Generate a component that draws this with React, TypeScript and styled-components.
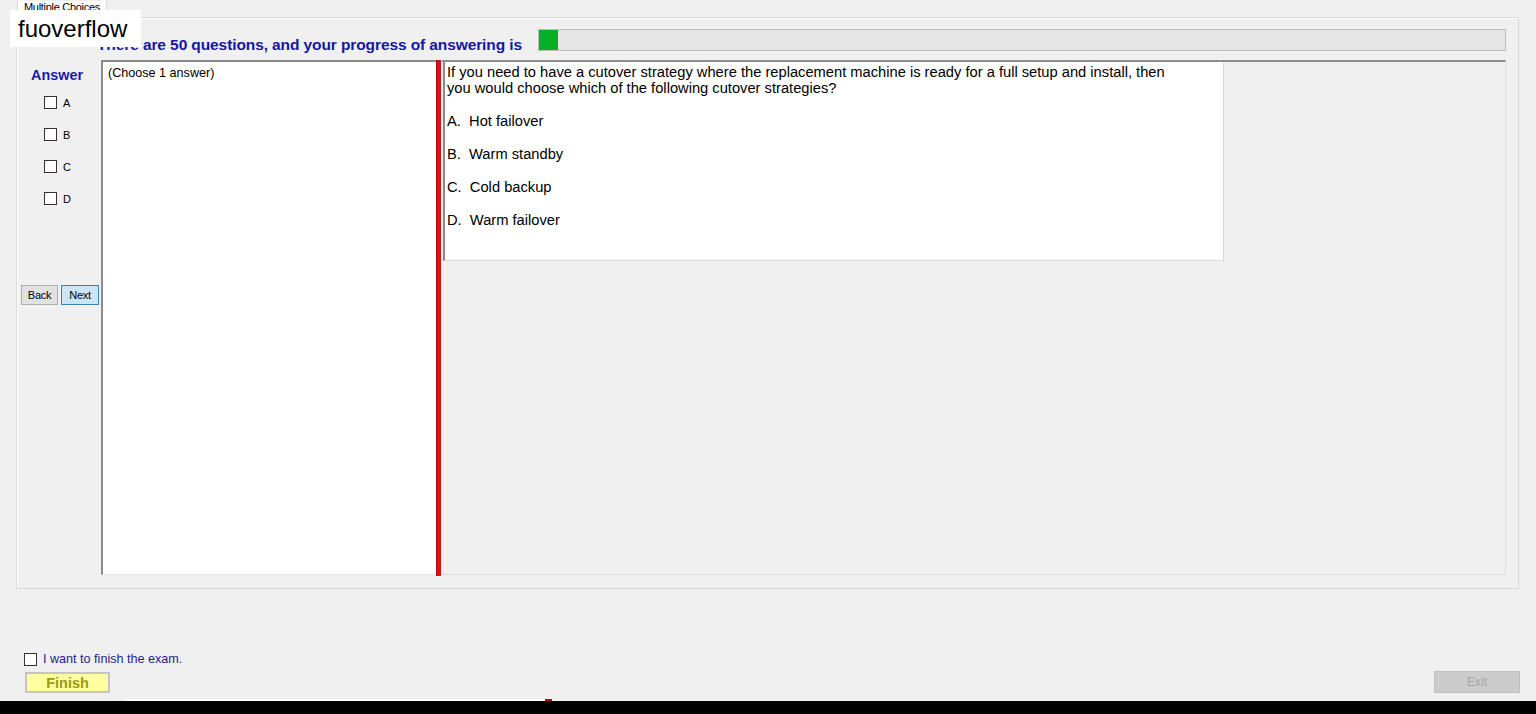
import React from "react";
import styled, { createGlobalStyle } from "styled-components";

const Global = createGlobalStyle`
  html, body { margin: 0; padding: 0; background: #f0f0f0; }
  body { font-family: "Liberation Sans", Arial, sans-serif; overflow: hidden; }
  * { box-sizing: border-box; }
`;

const Window = styled.div`
  position: relative;
  width: 1536px;
  height: 714px;
  background: #f0f0f0;
  display: flex;
  flex-direction: column;
`;

const TabStrip = styled.div`
  height: 17px;
  display: flex;
  align-items: flex-end;
  padding-left: 17px;
`;

const Tab = styled.div`
  width: 90px;
  height: 17px;
  margin-bottom: -1px;
  background: #ffffff;
  border: 1px solid #d9d9d9;
  border-bottom: none;
  border-top: none;
  font-size: 11px;
  line-height: 12px;
  color: #000;
  padding-left: 6px;
  letter-spacing: -0.3px;
  white-space: nowrap;
  overflow: hidden;
`;

const TabPage = styled.div`
  margin-left: 16px;
  width: 1503px;
  height: 572px;
  border: 1px solid #d9d9d9;
  box-shadow: inset 1px 1px 0 #ffffff;
  display: flex;
  flex-direction: column;
`;

const Header = styled.div`
  margin-top: 11px;
  height: 22px;
  display: flex;
  align-items: flex-end;
`;

const HeaderText = styled.div`
  width: 521px;
  margin-bottom: -2px;
  padding-left: 80px;
  font-size: 15.5px;
  font-weight: bold;
  letter-spacing: -0.1px;
  line-height: 17px;
  color: #1616a4;
  white-space: nowrap;
`;

const Progress = styled.div`
  width: 968px;
  height: 22px;
  background: #e6e6e6;
  border: 1px solid #bcbcbc;
  display: flex;
`;

const ProgressFill = styled.div`
  height: 100%;
  background: #06b025;
`;

const Body = styled.div`
  margin-top: 9px;
  height: 515px;
  display: flex;
`;

const AnswerColumn = styled.div`
  width: 84px;
  display: flex;
  flex-direction: column;
`;

const AnswerTitle = styled.div`
  margin-top: 7px;
  padding-left: 14px;
  font-size: 14.4px;
  font-weight: bold;
  line-height: 16px;
  color: #1a1aaa;
`;

const OptionList = styled.div`
  margin-top: 13px;
  padding-left: 27px;
  display: flex;
  flex-direction: column;
  gap: 19px;
`;

const OptionRow = styled.label`
  display: flex;
  align-items: center;
  gap: 6px;
  height: 13px;
  font-size: 11px;
  color: #000;
`;

const Box = styled.span`
  width: 13px;
  height: 13px;
  background: #ffffff;
  border: 1px solid #333333;
  flex: none;
`;

const NavRow = styled.div`
  margin-top: 80px;
  padding-left: 4px;
  display: flex;
  gap: 3px;
`;

const NavButton = styled.button<{ $focused?: boolean }>`
  height: 20px;
  width: ${(p) => (p.$focused ? 38 : 37)}px;
  padding: 0;
  font-family: "Liberation Sans", Arial, sans-serif;
  font-size: 11px;
  letter-spacing: -0.3px;
  color: #000;
  background: ${(p) => (p.$focused ? "#cce4f7" : "#e1e1e1")};
  border: 1px solid ${(p) => (p.$focused ? "#3c7fb1" : "#adadad")};
`;

const ChoicePanel = styled.div`
  width: 335px;
  background: #ffffff;
  border-top: 2px solid #8a8a8a;
  border-left: 2px solid #8a8a8a;
  border-bottom: 1px solid #e3e3e3;
  padding: 4px 0 0 5px;
  font-size: 12.6px;
  line-height: 15px;
  color: #000;
`;

const Splitter = styled.div`
  width: 6px;
  height: 516px;
  background: #d41414;
  border-left: 1px solid #a80c0c;
  border-right: 1px solid #f0f0f0;
`;

const QuestionArea = styled.div`
  width: 1064px;
  border-top: 2px solid #8c8c8c;
  border-right: 1px solid #dcdcdc;
  border-bottom: 1px solid #dcdcdc;
  padding-left: 1px;
`;

const QuestionBox = styled.div`
  width: 781px;
  height: 199px;
  background: #ffffff;
  border-left: 2px solid #8a8a8a;
  border-right: 1px solid #d8d8d8;
  border-bottom: 1px solid #d8d8d8;
  padding: 2px 0 0 2px;
  font-size: 14.7px;
  line-height: 16px;
  color: #000;
`;

const Choice = styled.div`
  margin-top: 17px;
  white-space: pre;
`;

const Footer = styled.div`
  margin-top: auto;
  height: 49px;
  display: flex;
  justify-content: space-between;
  align-items: flex-end;
  padding: 0 16px 6px 24px;
`;

const FinishGroup = styled.div`
  display: flex;
  flex-direction: column;
  gap: 6px;
`;

const ConfirmRow = styled.label`
  display: flex;
  align-items: center;
  gap: 6px;
  font-size: 12.6px;
  line-height: 14px;
  color: #1e1e90;
`;

const FinishButton = styled.button`
  margin-left: 1px;
  width: 85px;
  height: 21px;
  padding: 0;
  background: #ffffa0;
  border: 2px solid #c4c4c4;
  font-family: "Liberation Sans", Arial, sans-serif;
  font-size: 14.5px;
  font-weight: bold;
  color: #9a9a14;
`;

const ExitButton = styled.button`
  width: 86px;
  height: 22px;
  padding: 0;
  background: #cccccc;
  border: 1px solid #bfbfbf;
  font-family: "Liberation Sans", Arial, sans-serif;
  font-size: 12px;
  color: #a6a6a6;
`;

const Taskbar = styled.div`
  height: 15px;
  display: flex;
  flex-direction: column;
`;

const TaskbarEdge = styled.div`
  height: 2px;
  display: flex;
  padding-left: 126px;
`;

const EdgeSegment = styled.div<{ $w: number; $c: string }>`
  width: ${(p) => p.$w}px;
  background: ${(p) => p.$c};
`;

const TaskbarBody = styled.div`
  flex: 1;
  background: #000000;
`;

const Watermark = styled.div`
  position: absolute;
  left: 10px;
  top: 10px;
  width: 131px;
  height: 37px;
  background: #ffffff;
  padding-left: 8px;
  font-size: 24px;
  line-height: 37px;
  color: #000;
`;

const options = ["A", "B", "C", "D"];

const choices = [
  "A.  Hot failover",
  "B.  Warm standby",
  "C.  Cold backup",
  "D.  Warm failover",
];

export default function App() {
  const answered = 1;
  const total = 50;
  return (
    <Window>
      <Global />
      <TabStrip>
        <Tab>Multiple Choices</Tab>
      </TabStrip>
      <TabPage>
        <Header>
          <HeaderText>There are {total} questions, and your progress of answering is</HeaderText>
          <Progress>
            <ProgressFill style={{ width: `${(answered / total) * 100}%` }} />
          </Progress>
        </Header>
        <Body>
          <AnswerColumn>
            <AnswerTitle>Answer</AnswerTitle>
            <OptionList>
              {options.map((o) => (
                <OptionRow key={o}>
                  <Box />
                  {o}
                </OptionRow>
              ))}
            </OptionList>
            <NavRow>
              <NavButton>Back</NavButton>
              <NavButton $focused>Next</NavButton>
            </NavRow>
          </AnswerColumn>
          <ChoicePanel>(Choose 1 answer)</ChoicePanel>
          <Splitter />
          <QuestionArea>
            <QuestionBox>
              If you need to have a cutover strategy where the replacement machine is ready for a full setup and install, then
              <br />
              you would choose which of the following cutover strategies?
              {choices.map((c) => (
                <Choice key={c}>{c}</Choice>
              ))}
            </QuestionBox>
          </QuestionArea>
        </Body>
      </TabPage>
      <Footer>
        <FinishGroup>
          <ConfirmRow>
            <Box />
            I want to finish the exam.
          </ConfirmRow>
          <FinishButton>Finish</FinishButton>
        </FinishGroup>
        <ExitButton disabled>Exit</ExitButton>
      </Footer>
      <Taskbar>
        <TaskbarEdge>
          <EdgeSegment $w={419} $c="#ffffff" />
          <EdgeSegment $w={7} $c="#b01010" />
        </TaskbarEdge>
        <TaskbarBody />
      </Taskbar>
      <Watermark>fuoverflow</Watermark>
    </Window>
  );
}
